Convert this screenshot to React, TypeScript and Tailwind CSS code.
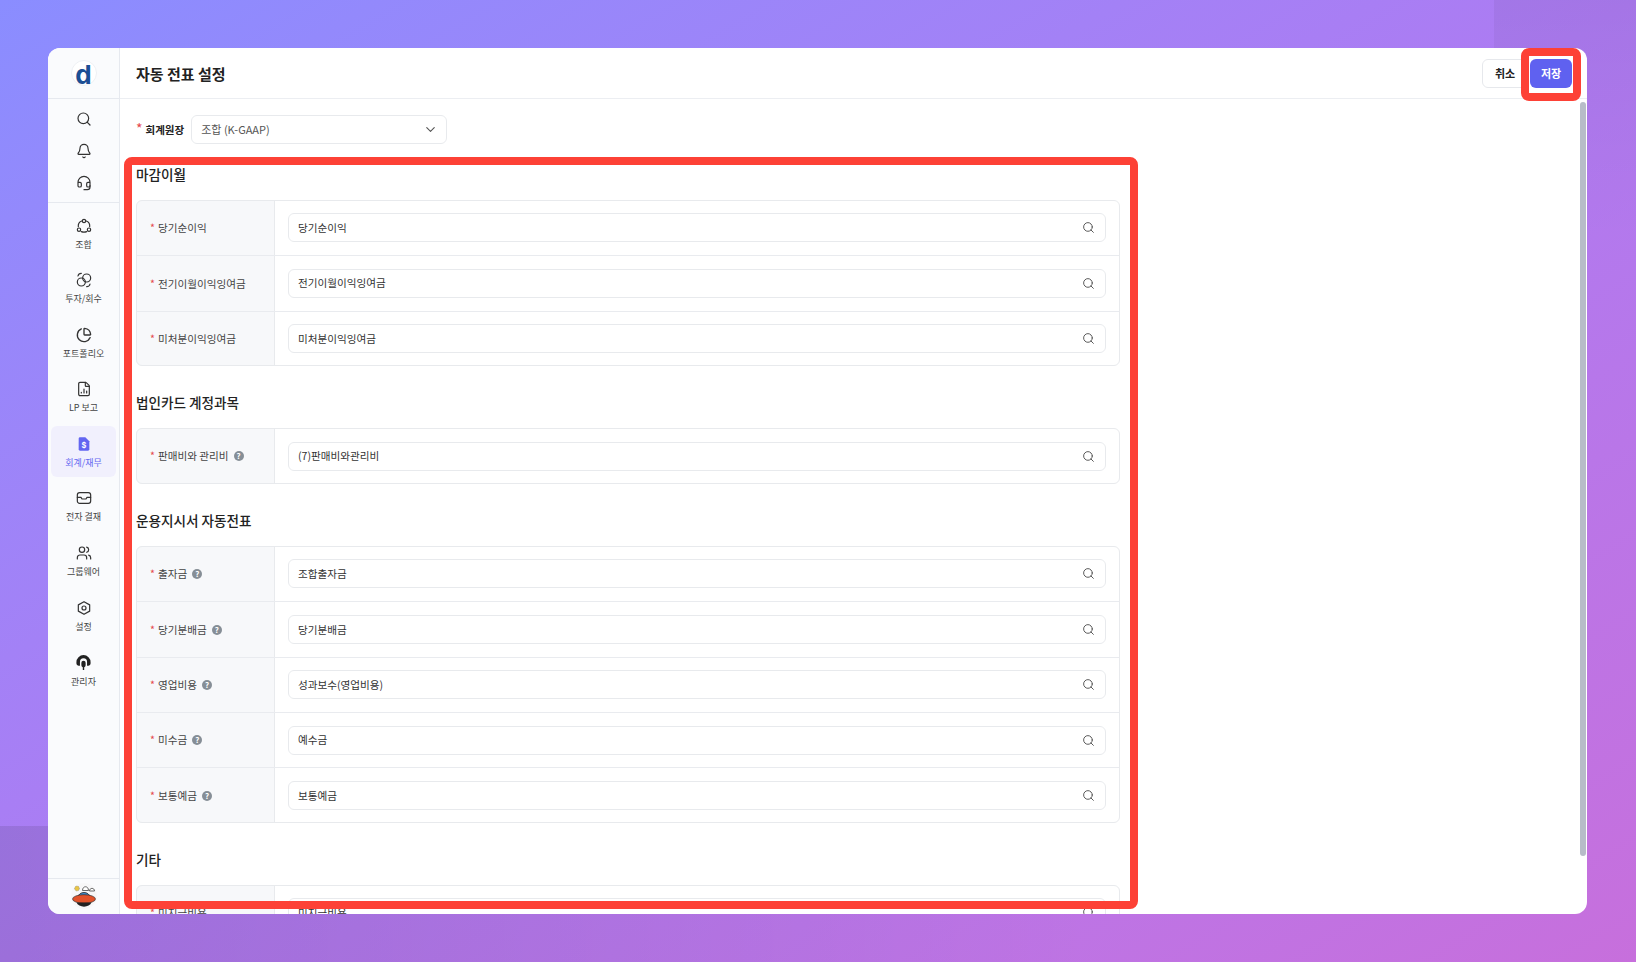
import { Search, Bell, ChevronDown, ChartPie, FileChartColumn, Users, Headset } from 'lucide-react';
import type { ReactNode } from 'react';

const font = { fontFamily: '"Noto Sans CJK KR", "Noto Sans", sans-serif' };

function Svg({ children, className = 'text-[#333]' }: { children: ReactNode; className?: string }) {
  return (
    <svg viewBox="0 0 24 24" fill="none" stroke="currentColor" strokeWidth="1.8" strokeLinecap="round" strokeLinejoin="round" className={`h-4 w-4 ${className}`}>
      {children}
    </svg>
  );
}

const FundIcon = () => (
  <Svg>
    <circle cx="12" cy="4.500" r="2.500" />
    <circle cx="4.500" cy="17.500" r="2.500" />
    <circle cx="19.500" cy="17.500" r="2.500" />
    <path d="M8.500 4.500C5 6 3 9.500 3.500 13M15.500 4.500C19 6 21 9.500 20.500 13M8 20.500c2.500 1 5.500 1 8 0" />
  </Svg>
);

const InvestIcon = () => (
  <Svg>
    <circle cx="8" cy="15" r="6" />
    <circle cx="16" cy="9" r="6" />
    <path d="M3 6a5 5 0 0 1 5-4M21 18a5 5 0 0 1-5 4" />
  </Svg>
);

const LedgerIcon = () => (
  <svg viewBox="0 0 24 24" className="h-4 w-4">
    <path d="M6 2h8l6 6v12a2 2 0 0 1-2 2H6a2 2 0 0 1-2-2V4a2 2 0 0 1 2-2z" fill="#6366f1" />
    <text x="12" y="18" textAnchor="middle" fontSize="11" fontWeight="700" fill="#fff" fontFamily="Inter, sans-serif">$</text>
  </svg>
);

const ApprovalIcon = () => (
  <Svg>
    <rect x="2" y="4" width="20" height="16" rx="3.500" />
    <path d="M2 11h5.500l1.500 2.500h6l1.500-2.500H22" />
  </Svg>
);

const SettingsIcon = () => (
  <Svg>
    <path d="M12 2.500l8.500 4.800v9.400L12 21.500l-8.500-4.800V7.300z" />
    <circle cx="12" cy="12" r="3" />
  </Svg>
);

const AdminIcon = () => (
  <svg viewBox="0 0 24 24" className="h-[17px] w-[17px] text-[#222]" fill="currentColor">
    <path d="M12 1.500a10 10 0 0 0-10 10v2A3 3 0 0 0 5 16.500h2V11a5 5 0 0 1 10 0v5.500h2a3 3 0 0 0 3-3v-2a10 10 0 0 0-10-10z" />
    <path d="M9 12.500a3 3 0 0 1 6 0v3.500a3 3 0 0 1-2 2.800V22.500h-2v-3.700A3 3 0 0 1 9 16z" />
  </svg>
);

const nav = [
  { label: '조합', icon: <FundIcon /> },
  { label: '투자/회수', icon: <InvestIcon /> },
  { label: '포트폴리오', icon: <ChartPie size={16} strokeWidth={2} className="text-[#333]" /> },
  { label: 'LP 보고', icon: <FileChartColumn size={16} strokeWidth={1.8} className="text-[#333]" /> },
  { label: '회계/재무', icon: <LedgerIcon />, active: true },
  { label: '전자 결재', icon: <ApprovalIcon /> },
  { label: '그룹웨어', icon: <Users size={16} strokeWidth={1.8} className="text-[#333]" /> },
  { label: '설정', icon: <SettingsIcon /> },
  { label: '관리자', icon: <AdminIcon /> },
];

const sections = [
  {
    title: '마감이월',
    rows: [
      { label: '당기순이익', value: '당기순이익' },
      { label: '전기이월이익잉여금', value: '전기이월이익잉여금' },
      { label: '미처분이익잉여금', value: '미처분이익잉여금' },
    ],
  },
  {
    title: '법인카드 계정과목',
    rows: [{ label: '판매비와 관리비', value: '(7)판매비와관리비', help: true }],
  },
  {
    title: '운용지시서 자동전표',
    rows: [
      { label: '출자금', value: '조합출자금', help: true },
      { label: '당기분배금', value: '당기분배금', help: true },
      { label: '영업비용', value: '성과보수(영업비용)', help: true },
      { label: '미수금', value: '예수금', help: true },
      { label: '보통예금', value: '보통예금', help: true },
    ],
  },
  {
    title: '기타',
    rows: [{ label: '미지급비용', value: '미지급비용' }],
  },
];

function HelpDot() {
  return (
    <span className="ml-[5px] flex h-[10px] w-[10px] items-center justify-center rounded-full bg-[#868e96] text-[8px] font-bold leading-none text-white">?</span>
  );
}

function Avatar() {
  return (
    <svg viewBox="0 0 26 26" className="h-[26px] w-[26px]">
      <circle cx="13" cy="13" r="13" fill="#f7f7f8" />
      <circle cx="6" cy="5.500" r="2.400" fill="#e8c547" stroke="#888" strokeWidth="0.6" strokeDasharray="1 0.6" />
      <path d="M11.500 7.500c0-5 6-5 6 0zM18.500 8c0-3.500 5-3.500 5 0z" fill="#fff" stroke="#444" strokeWidth="0.8" />
      <path d="M7 14c1-6 11-6 12 0z" fill="#3f8fd0" stroke="#222" strokeWidth="0.8" />
      <ellipse cx="13" cy="16" rx="11.500" ry="4.300" fill="#e2522a" stroke="#222" strokeWidth="0.6" />
      <path d="M5.500 19.500c2 5.500 13 5.500 15 0z" fill="#222" />
    </svg>
  );
}

export default function App() {
  return (
    <div style={font} className="relative h-[962px] w-[1636px] overflow-hidden bg-gradient-to-br from-[#8a8dff] via-[#ad7bf2] to-[#c76fdc] pl-12 pt-12">
      {/* darker decor squares in the background */}
      <div className="absolute right-0 top-0 h-[240px] w-[142px] bg-gradient-to-b from-black/5 to-transparent" />
      <div className="absolute bottom-0 left-0 h-[136px] w-[1100px] bg-gradient-to-r from-black/10 to-transparent" />

      <div className="relative flex h-[866px] w-[1539px] overflow-hidden rounded-xl bg-white">
        {/* Sidebar */}
        <aside className="flex w-[72px] shrink-0 flex-col border-r border-[#e6e9ef] bg-[#fafbfd]">
          <div className="flex h-[51px] shrink-0 items-center justify-center border-b border-[#e6e9ef]">
            <div className="flex h-[26px] w-[26px] items-center justify-center rounded-full border border-[#eef0f4] bg-white">
              <span style={{ fontFamily: 'Inter, sans-serif' }} className="mt-1 text-[26px] font-bold leading-none text-[#1c4f94]">d</span>
            </div>
          </div>
          <div className="flex h-[104px] shrink-0 flex-col items-center gap-4 border-b border-[#e6e9ef] pt-[11.500px]">
            <Search size={16} strokeWidth={1.8} className="text-[#333]" />
            <Bell size={16} strokeWidth={1.8} className="text-[#333]" />
            <Headset size={16} strokeWidth={1.8} className="text-[#333]" />
          </div>
          <nav className="flex flex-1 flex-col items-center gap-[3.600px] pt-[4.500px]">
            {nav.map((item) => (
              <div key={item.label} className={`flex h-[51px] w-[65px] flex-col items-center justify-center gap-[4px] rounded-md pt-[2px] ${item.active ? 'bg-[#f1f0fd]' : ''}`}>
                {item.icon}
                <span className={`text-[9px] leading-[13px] ${item.active ? 'text-[#6366f1]' : 'text-[#444]'}`}>{item.label}</span>
              </div>
            ))}
          </nav>
          <div className="flex h-[36px] shrink-0 items-start justify-center border-t border-[#e6e9ef] pt-[4px]">
            <Avatar />
          </div>
        </aside>

        {/* Main */}
        <main className="relative flex min-w-0 flex-1 flex-col">
          <header className="flex h-[51px] shrink-0 items-center justify-between border-b border-[#eceef2] pl-4 pr-[15px]">
            <h1 className="text-[15px] font-bold leading-none text-[#222]">자동 전표 설정</h1>
            <div className="flex items-center gap-[2px]">
              <button className="h-[29px] w-[46px] rounded-md border border-[#e6e8ec] bg-white text-[11px] font-bold text-[#222]">취소</button>
              <button className="h-[29px] w-[42px] rounded-md bg-[#5f61f0] text-[11px] font-bold text-white">저장</button>
            </div>
          </header>

          <div className="flex-1 overflow-hidden pl-4 pt-4">
            <div className="flex h-[29px] items-center">
              <span className="mr-[3px] -mt-1 text-[14px] leading-none text-[#e5484d]">*</span>
              <span className="mr-[7px] text-[10.500px] font-bold text-[#222]">회계원장</span>
              <div className="flex h-[29px] w-[256px] items-center justify-between rounded-md border border-[#e8eaed] pl-[9px] pr-[8px] text-[11px] text-[#555]">
                조합 (K-GAAP)
                <ChevronDown size={15} strokeWidth={1.8} className="text-[#555]" />
              </div>
            </div>

            {sections.map((section, i) => (
              <section key={section.title} className={i === 0 ? 'mt-[21px]' : 'mt-[27.500px]'}>
                <h2 className="mb-[17px] text-[13.600px] font-medium leading-[18px] text-[#222]">{section.title}</h2>
                <div className="w-[984px] overflow-hidden rounded-md outline outline-1 -outline-offset-1 outline-[#e8eaed]">
                  {section.rows.map((row, r) => (
                    <div key={row.label} className={`flex h-[55.300px] ${r > 0 ? 'border-t border-[#e9ebef]' : ''}`}>
                      <div className="flex w-[139px] shrink-0 items-center border-r border-[#e8eaed] bg-[#f7f8fa] pl-[14px] text-[10.600px] text-[#444]">
                        <span className="mr-[3px] text-[#e5484d]">*</span>
                        {row.label}
                        {row.help && <HelpDot />}
                      </div>
                      <div className="flex flex-1 items-center pl-[13px] pr-[14px]">
                        <div className="flex h-[29px] flex-1 items-center justify-between rounded-md border border-[#e8eaed] pl-[9px] pr-[10px] text-[10.600px] text-[#333]">
                          {row.value}
                          <Search size={13} strokeWidth={1.8} className="text-[#555]" />
                        </div>
                      </div>
                    </div>
                  ))}
                </div>
              </section>
            ))}
          </div>

          {/* scrollbar thumb */}
          <div className="absolute right-px top-[54px] h-[754px] w-[6px] rounded-full bg-[#b7bcc8]" />
        </main>
      </div>

      {/* red highlight boxes drawn over the screenshot */}
      <div className="absolute left-[124px] top-[157px] h-[752px] w-[1014px] rounded-lg border-8 border-[#fd4136]" />
      <div className="absolute left-[1521px] top-[48px] h-[53px] w-[60px] rounded-lg border-8 border-[#fd4136]" />
    </div>
  );
}
